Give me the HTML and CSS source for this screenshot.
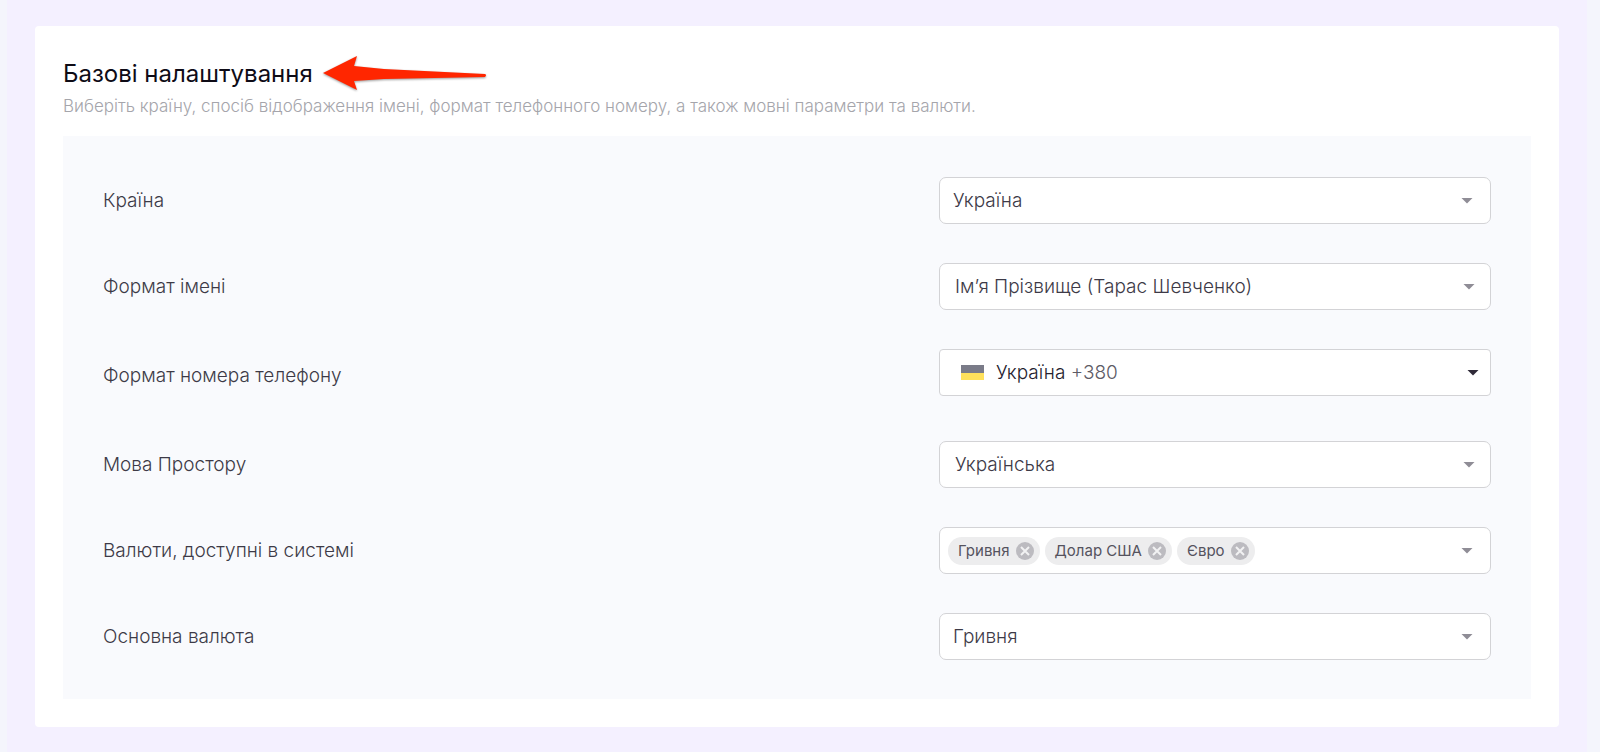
FILE: index.html
```html
<!DOCTYPE html>
<html lang="uk">
<head>
    <meta charset="UTF-8">
    <meta name="viewport" content="width=device-width, initial-scale=1.0">
    <title>Базові налаштування</title>
    <link rel="stylesheet" href="styles.css">
</head>
<body>
    <main class="page">
        <section class="card">
            <div class="card-title">
                <h1>Базові налаштування</h1>
                <svg class="pointer" width="166" height="40" viewBox="0 0 166 40" aria-hidden="true">
                    <path d="M1 20 L35 3 L32 13 L62 16 L163 21 Q165 22 163 24 L62 26 L32 28 L35 37 Z"/>
                </svg>
            </div>
            <p class="card-text">Виберіть країну, спосіб відображення імені, формат телефонного номеру, а також мовні параметри та валюти.</p>

            <form class="panel">
                <div class="row">
                    <label for="country">Країна</label>
                    <div class="field">
                        <select id="country">
                            <option>Україна</option>
                        </select>
                        <span class="caret"></span>
                    </div>
                </div>

                <div class="row">
                    <label for="name-format">Формат імені</label>
                    <div class="field field-inset">
                        <select id="name-format">
                            <option>Ім’я Прізвище (Тарас Шевченко)</option>
                        </select>
                        <span class="caret"></span>
                    </div>
                </div>

                <div class="row row-phone">
                    <label for="phone-format">Формат номера телефону</label>
                    <button type="button" class="field field-phone" id="phone-format">
                        <svg class="flag" width="23" height="15" viewBox="0 0 23 15" aria-hidden="true">
                            <rect width="23" height="8" fill="#7a7b88"/>
                            <rect y="8" width="23" height="7" fill="#ffe15c"/>
                        </svg>
                        <span class="phone-country">Україна <span class="phone-code">+380</span></span>
                        <span class="caret"></span>
                    </button>
                </div>

                <div class="row">
                    <label for="language">Мова Простору</label>
                    <div class="field field-inset">
                        <select id="language">
                            <option>Українська</option>
                        </select>
                        <span class="caret"></span>
                    </div>
                </div>

                <div class="row">
                    <label for="currencies">Валюти, доступні в системі</label>
                    <div class="field field-tags">
                        <span class="tag">Гривня
                            <button type="button" class="tag-remove" aria-label="Видалити Гривня">
                                <svg width="10" height="10" viewBox="0 0 10 10"><path d="M1 1 L9 9 M9 1 L1 9"/></svg>
                            </button>
                        </span>
                        <span class="tag">Долар США
                            <button type="button" class="tag-remove" aria-label="Видалити Долар США">
                                <svg width="10" height="10" viewBox="0 0 10 10"><path d="M1 1 L9 9 M9 1 L1 9"/></svg>
                            </button>
                        </span>
                        <span class="tag">Євро
                            <button type="button" class="tag-remove" aria-label="Видалити Євро">
                                <svg width="10" height="10" viewBox="0 0 10 10"><path d="M1 1 L9 9 M9 1 L1 9"/></svg>
                            </button>
                        </span>
                        <input type="text" class="tag-input" id="currencies">
                        <span class="caret"></span>
                    </div>
                </div>

                <div class="row">
                    <label for="main-currency">Основна валюта</label>
                    <div class="field">
                        <select id="main-currency">
                            <option>Гривня</option>
                        </select>
                        <span class="caret"></span>
                    </div>
                </div>
            </form>
        </section>
    </main>
</body>
</html>
```
FILE: styles.css
```css
* {
    margin: 0;
    padding: 0;
    box-sizing: border-box;
}

body {
    font-family: 'Inter', sans-serif;
    font-size: 19px;
    font-weight: 300;
    color: #3d3a47;
    background: #f4f5fc;
    padding: 0 13px 0 7px;
}

.page {
    min-height: 100vh;
    background: #f4f0ff;
    padding: 26px 28px 25px;
}

.card {
    background: #fff;
    border-radius: 4px;
    padding: 28px;
}

.card-title {
    display: flex;
    align-items: center;
    gap: 9px;
    height: 38px;
}

h1 {
    font-size: 24px;
    font-weight: 400;
    color: #0e0b16;
}

.pointer path {
    fill: #ff2600;
    filter: drop-shadow(0 1px 1px rgba(0, 0, 0, 0.4));
}

.card-text {
    font-size: 17px;
    line-height: 28px;
    color: #a5a5ab;
    margin-bottom: 16px;
}

/* Settings form */
.panel {
    display: flex;
    flex-direction: column;
    gap: 39px;
    background: #f9fafd;
    padding: 41px 40px 39px;
}

.row {
    display: grid;
    grid-template-columns: 3fr 2fr;
    column-gap: 8px;
    align-items: center;
}

.row-phone {
    min-height: 53px;
}

.field {
    display: flex;
    align-items: center;
    min-width: 0;
    height: 47px;
    background: #fff;
    border: 1px solid #d3d3d6;
    border-radius: 7px;
    padding: 0 17px 0 13px;
}

.field-inset {
    padding: 0 15px;
}

.field select {
    flex: 1;
    min-width: 0;
    height: 100%;
    appearance: none;
    border: none;
    outline: none;
    background: none;
    font: inherit;
    color: inherit;
}

.caret {
    width: 12px;
    height: 6px;
    background: #8f8d96;
    clip-path: polygon(0 0, 100% 0, 50% 100%);
    pointer-events: none;
}

/* Phone format */
.field-phone {
    align-self: start;
    border-radius: 4px;
    padding: 0 11px 0 21px;
    font: inherit;
    color: #25222e;
    text-align: left;
}

.field-phone .caret {
    background: #2f2a38;
}

.flag {
    margin-right: 12px;
}

.phone-country {
    flex: 1;
}

.phone-code {
    color: #5d5b66;
}

/* Currency tags */
.field-tags {
    gap: 5px;
    padding-left: 8px;
}

.tag {
    display: flex;
    align-items: center;
    gap: 6px;
    height: 28px;
    padding: 0 6px 0 10px;
    border-radius: 14px;
    background: #ededee;
    font-size: 15px;
    font-weight: 400;
    color: #55535e;
    white-space: nowrap;
}

.tag-remove {
    display: flex;
    align-items: center;
    justify-content: center;
    width: 18px;
    height: 18px;
    border: none;
    border-radius: 50%;
    background: #bcbbc0;
}

.tag-remove path {
    stroke: #f2f2f3;
    stroke-width: 2;
}

.tag-input {
    flex: 1;
    min-width: 0;
    border: none;
    outline: none;
    background: none;
    font: inherit;
}
```
